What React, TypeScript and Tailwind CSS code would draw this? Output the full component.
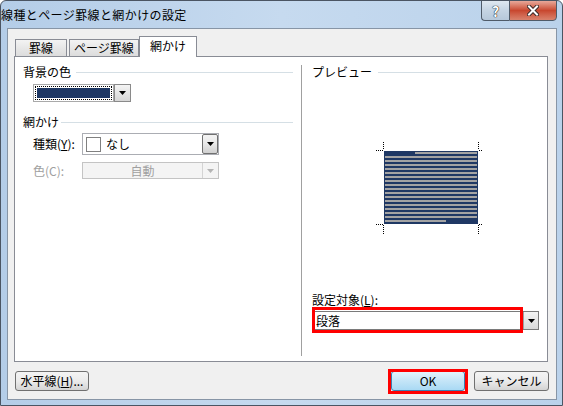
import React from "react";

function Arrow({ disabled = false }: { disabled?: boolean }) {
  return (
    <svg width="7" height="4" viewBox="0 0 7 4">
      <path d="M0 0h7L3.5 4z" fill={disabled ? "#b4b4b4" : "#000"} />
    </svg>
  );
}

function Preview() {
  const rows = Array.from({ length: 18 }, (_, i) => i);
  return (
    <svg width="110" height="100" viewBox="0 0 110 100">
      <rect x="12" y="13" width="94" height="73" fill="#1f3864" />
      {rows.map((i) => {
        const x1 = i === 0 ? 43 : 13;
        const x2 = i === 17 ? 74 : 105;
        return <rect key={i} x={x1} y={14 + 4 * i} width={x2 - x1} height="2" fill="#a3a3a3" />;
      })}
      <g stroke="#000" strokeWidth="1" strokeDasharray="1 1" fill="none">
        <line x1="4" y1="12.5" x2="11" y2="12.5" />
        <line x1="11.5" y1="4" x2="11.5" y2="12" />
        <line x1="107" y1="12.5" x2="115" y2="12.5" />
        <line x1="106.5" y1="4" x2="106.5" y2="12" />
        <line x1="4" y1="86.5" x2="11" y2="86.5" />
        <line x1="11.5" y1="87" x2="11.5" y2="96" />
        <line x1="107" y1="86.5" x2="115" y2="86.5" />
        <line x1="106.5" y1="87" x2="106.5" y2="96" />
      </g>
    </svg>
  );
}

function Btn({ children, className = "" }: { children: React.ReactNode; className?: string }) {
  return (
    <div
      className={
        "h-[20px] rounded-[3px] border border-[#707070] bg-gradient-to-b from-[#f4f4f4] via-[#ebebeb] to-[#d4d4d4] flex items-center justify-center leading-[14px] " +
        className
      }
    >
      {children}
    </div>
  );
}

export default function App() {
  return (
    <div className="w-[563px] h-[406px] bg-white text-[12px] text-black font-['Noto_Sans_CJK_JP','Noto_Sans',sans-serif]">
      <div className="w-[563px] h-[406px] flex flex-col border border-[#4b5563] rounded-t-[6px] bg-gradient-to-r from-[#b4cde8] via-[#c6daef] to-[#bad2eb] overflow-hidden">
        {/* title bar */}
        <div className="h-[27px] shrink-0 flex items-start">
          <div className="mt-[6px] h-[16px] leading-[16px] text-[12px] tracking-[0.4px] text-black">
            線種とページ罫線と網かけの設定
          </div>
          <div className="ml-auto mr-[5px] -mt-px flex">
            <div className="w-[28px] h-[21px] border border-[#4f5b69] border-r-0 rounded-bl-[4px] bg-gradient-to-b from-[#dfe8f1] via-[#c5d4e3] to-[#b6c8da] flex items-center justify-center">
              <span className="text-[14px] leading-[14px] font-bold text-white [text-shadow:0_0_1px_#000,0_0_1px_#000]">?</span>
            </div>
            <div className="w-[48px] h-[21px] border border-[#4f5b69] rounded-br-[4px] bg-gradient-to-b from-[#e7a89a] via-[#c8472f] to-[#d9826d] flex items-center justify-center">
              <svg width="12" height="11" viewBox="0 0 12 11">
                <path d="M2 1.5l8 8M10 1.5l-8 8" stroke="#3b2a28" strokeWidth="4" strokeLinecap="square" />
                <path d="M2 1.5l8 8M10 1.5l-8 8" stroke="#fff" strokeWidth="2" strokeLinecap="square" />
              </svg>
            </div>
          </div>
        </div>

        {/* client */}
        <div className="ml-[6px] mr-[5px] h-[372px] shrink-0 border border-[#8795a6] bg-[#f0f0f0] flex flex-col">
          {/* tabs */}
          <div className="mt-[7px] ml-[6px] h-[20px] flex items-end">
            <div className="ml-[1px] w-[52px] h-[17px] border border-b-0 border-[#898c95] bg-gradient-to-b from-[#f3f3f3] to-[#dcdcdc] flex items-center justify-center leading-[14px]">
              罫線
            </div>
            <div className="ml-[2px] w-[70px] h-[17px] border border-b-0 border-[#898c95] bg-gradient-to-b from-[#f3f3f3] to-[#dcdcdc] flex items-center justify-center leading-[14px]">
              ページ罫線
            </div>
            <div className="relative z-10 w-[58px] h-[21px] -mb-px border border-b-0 border-[#898c95] bg-white flex items-center justify-center leading-[14px] pb-[2px]">
              網かけ
            </div>
          </div>

          {/* tab page */}
          <div className="ml-[6px] w-[534px] h-[306px] border border-[#898c95] bg-white flex">
            {/* left */}
            <div className="w-[278px] flex flex-col">
              <div className="mt-[8px] h-[14px] flex items-center pl-[8px]">
                <span className="leading-[14px]">背景の色</span>
                <div className="ml-[5px] flex-1 h-px bg-[#d5dfe5]" />
              </div>
              <div className="ml-[18px] mt-[5px] flex h-[18px]">
                <div className="w-[81px] h-[18px] border border-[#a9a9a9] p-px">
                  <div className="w-full h-full border border-dotted border-black p-px">
                    <div className="w-full h-full bg-[#1f3864]" />
                  </div>
                </div>
                <div className="w-[17px] h-[18px] border border-[#8a8a8a] bg-gradient-to-b from-[#f4f4f4] to-[#d6d6d6] flex items-center justify-center">
                  <Arrow />
                </div>
              </div>

              <div className="mt-[13px] h-[14px] flex items-center pl-[8px]">
                <span className="leading-[14px]">網かけ</span>
                <div className="ml-[2px] flex-1 h-px bg-[#d5dfe5]" />
              </div>

              <div className="mt-[4px] ml-[18px] h-[22px] flex items-center">
                <span className="w-[49px] leading-[14px]">
                  種類(<span className="underline">Y</span>):
                </span>
                <div className="w-[137px] h-[22px] border border-[#abadb3] bg-white flex items-center">
                  <div className="ml-[3px] w-[15px] h-[15px] border border-[#808080] bg-white" />
                  <span className="ml-[5px] leading-[14px]">なし</span>
                  <div className="ml-auto w-[16px] h-[20px] border border-[#707070] rounded-[2px] bg-gradient-to-b from-[#f4f4f4] via-[#e8e8e8] to-[#d0d0d0] flex items-center justify-center">
                    <Arrow />
                  </div>
                </div>
              </div>

              <div className="mt-[7px] ml-[18px] h-[17px] flex items-center">
                <span className="w-[49px] leading-[14px] text-[#a0a0a0]">色(C):</span>
                <div className="w-[137px] h-[17px] border border-[#c4c4c4] bg-[#f4f4f4] flex items-center">
                  <span className="flex-1 text-center leading-[14px] text-[#a0a0a0]">自動</span>
                  <div className="w-[16px] h-[15px] border-l border-[#d4d4d4] flex items-center justify-center">
                    <Arrow disabled />
                  </div>
                </div>
              </div>
            </div>

            {/* right */}
            <div className="ml-[8px] mt-[8px] mb-[5px] flex-1 border-l border-[#a0a0a0] flex flex-col pl-[10px] pr-[7px]">
              <div className="h-[14px] flex items-center">
                <span className="leading-[14px]">プレビュー</span>
                <div className="ml-[6px] flex-1 h-px bg-[#d5dfe5]" />
              </div>
              <div className="mt-[59px] ml-[60px] w-[110px] h-[100px]">
                <Preview />
              </div>
              <div className="mt-[55px] h-[14px] leading-[14px]">
                設定対象(<span className="underline">L</span>):
              </div>
              <div className="mt-[4px] relative w-[227px] h-[19px] border border-[#7a7a7a] bg-white flex items-center">
                <span className="ml-[3px] leading-[14px]">段落</span>
                <div className="ml-auto w-[15px] h-[17px] border-l border-[#a0a0a0] bg-gradient-to-b from-[#f4f4f4] to-[#d8d8d8] flex items-center justify-center">
                  <Arrow />
                </div>
                <div className="absolute left-[-1px] top-[-5px] w-[211px] h-[26px] border-[3px] border-[#ff0000]" />
              </div>
            </div>
          </div>

          {/* buttons */}
          <div className="mt-[9px] flex items-center">
            <Btn className="ml-[7px] w-[74px]">
              <span>
                水平線(<span className="underline">H</span>)...
              </span>
            </Btn>
            <div className="ml-auto relative w-[74px] h-[20px] rounded-[3px] border border-[#3c7fb1] bg-gradient-to-b from-[#e3f3fc] via-[#c4e5f7] to-[#a9d9f4] flex items-center justify-center leading-[14px]">
              OK
              <div className="absolute left-[-4px] top-[-3px] w-[80px] h-[25px] border-[3px] border-[#ff0000]" />
            </div>
            <Btn className="ml-[9px] mr-[7px] w-[75px]">キャンセル</Btn>
          </div>
        </div>
      </div>
    </div>
  );
}
